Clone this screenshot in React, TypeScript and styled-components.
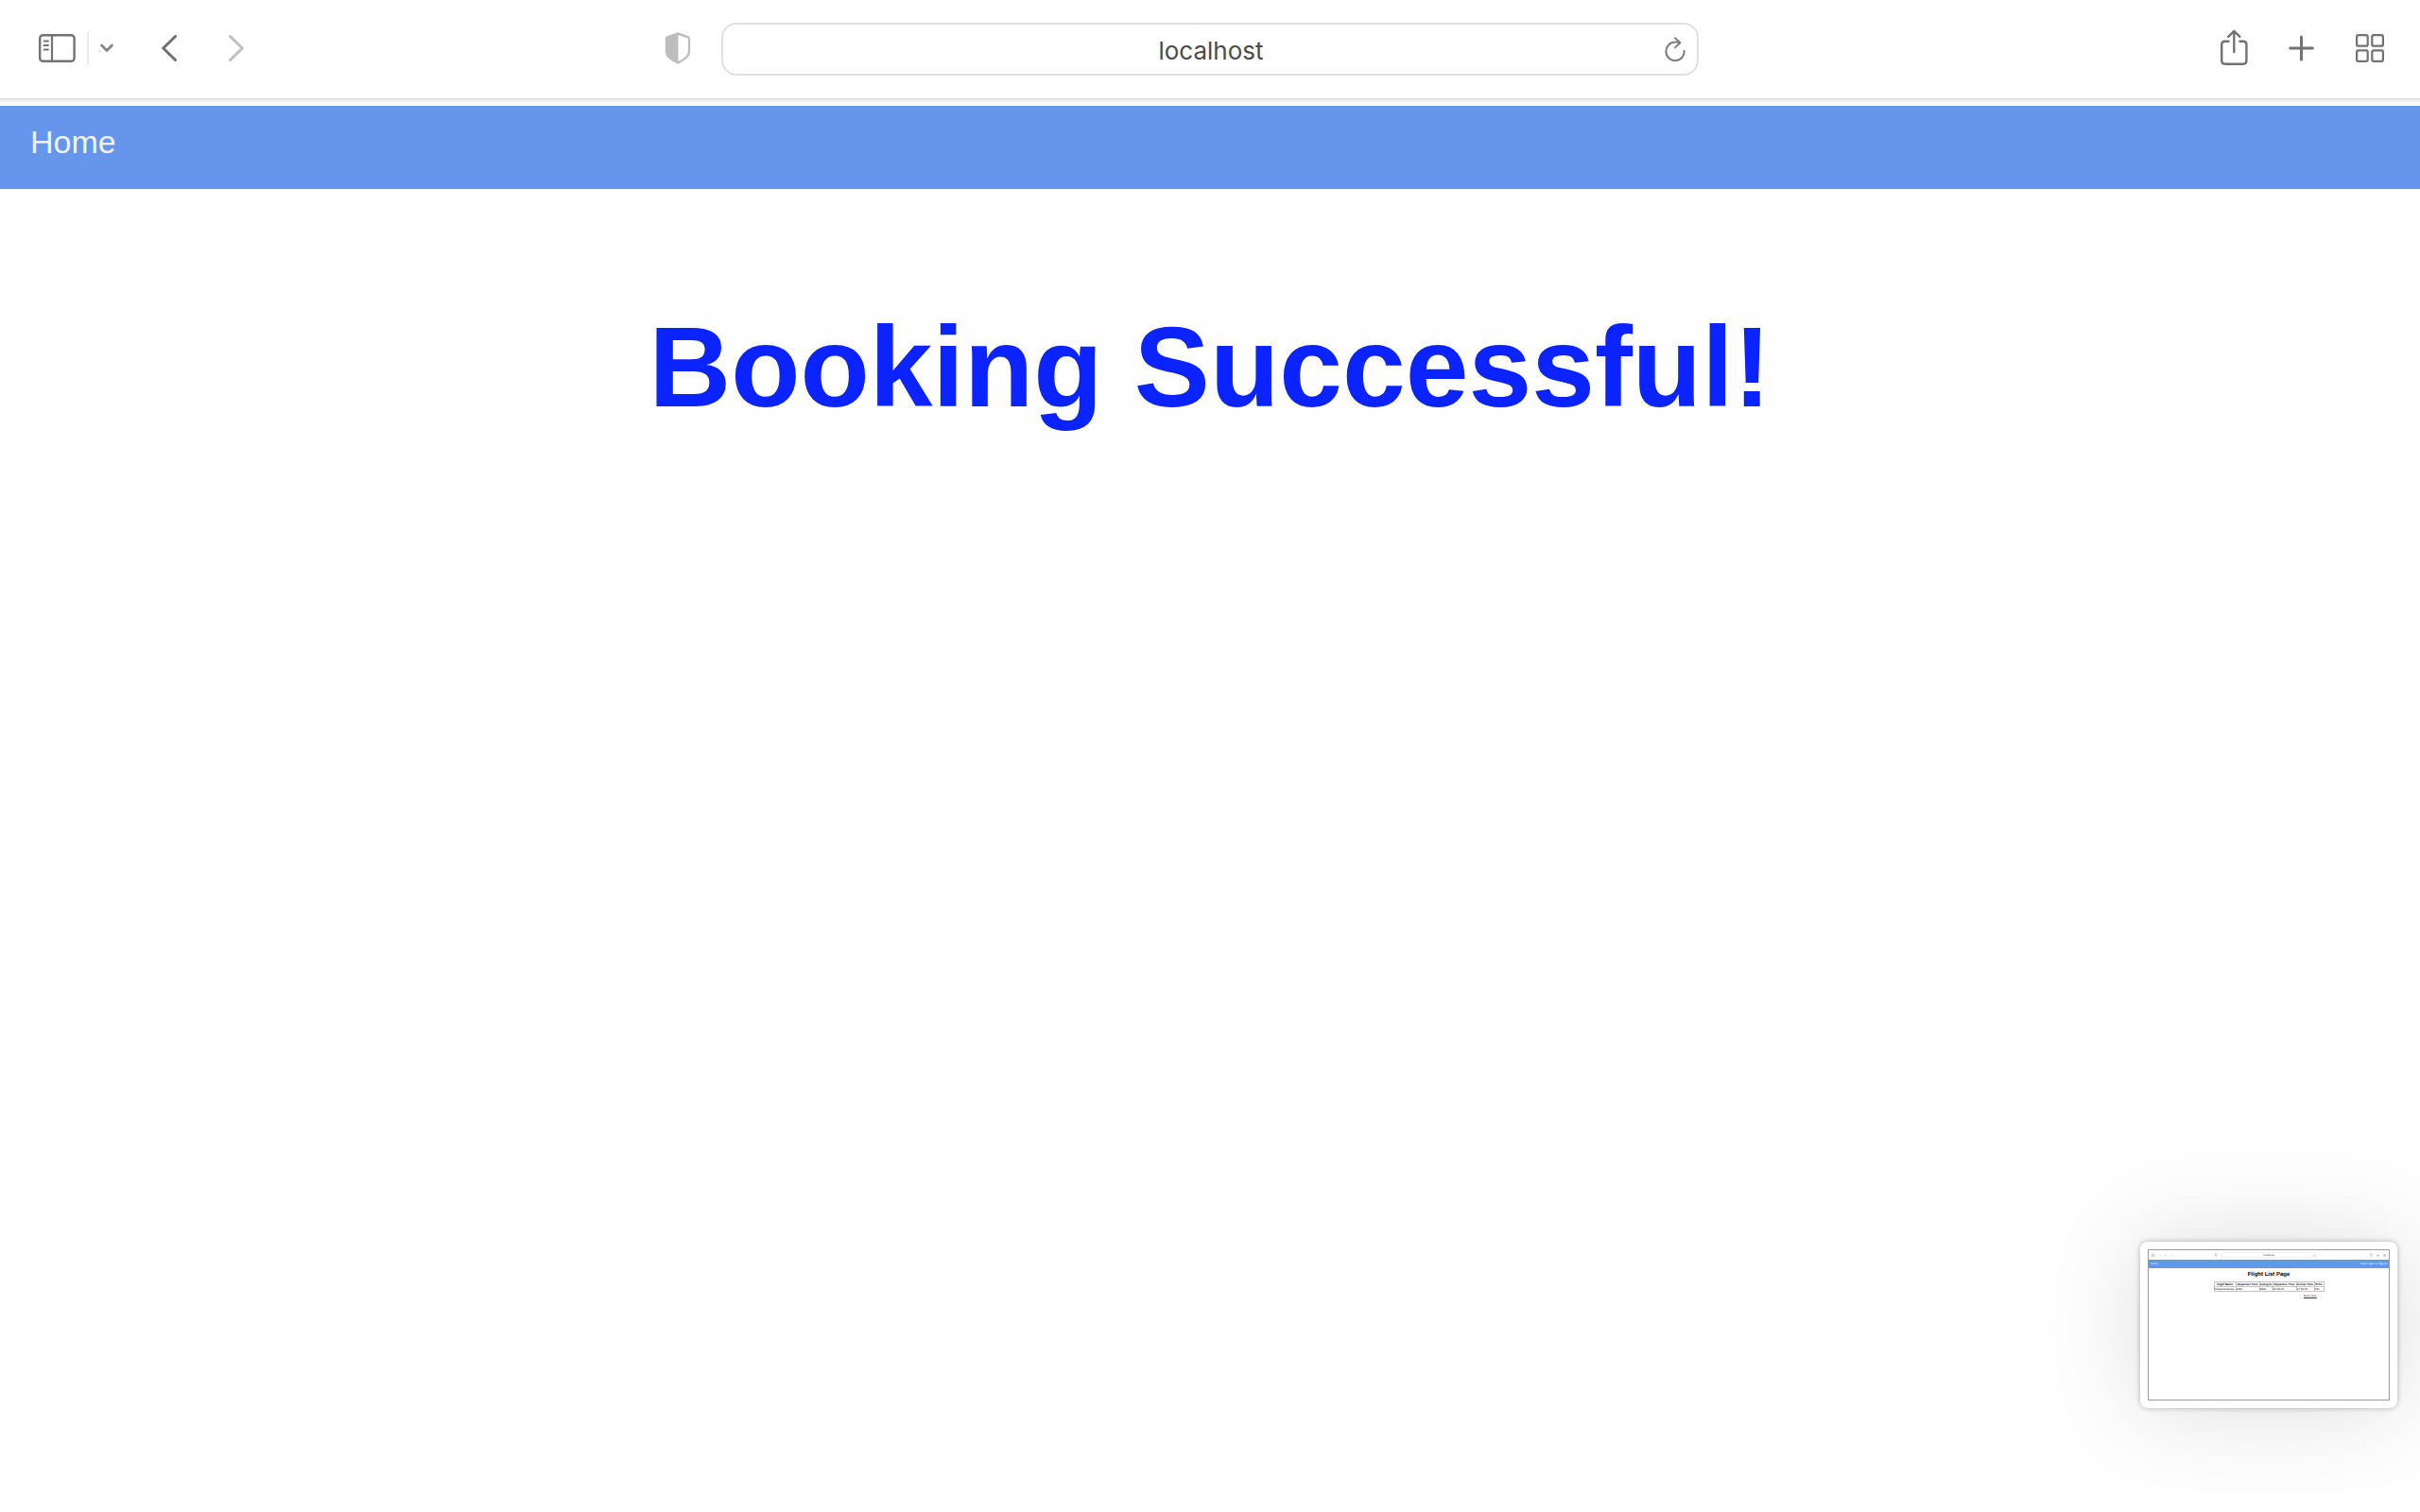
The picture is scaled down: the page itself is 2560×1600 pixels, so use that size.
import React from 'react';
import styled, { createGlobalStyle } from 'styled-components';

const GlobalStyle = createGlobalStyle`
  *, *::before, *::after { box-sizing: border-box; }
  body {
    margin: 0;
    background: #fefefe;
    font-family: "Liberation Sans", Arial, sans-serif;
  }
`;

/* ---------- icons ---------- */

type IconProps = { width?: number; height?: number };

const SidebarIcon = ({ width = 39, height = 30 }: IconProps) => (
  <svg width={width} height={height} viewBox="0 0 39 30" fill="none" stroke="#727272" aria-hidden="true">
    <rect x="1.2" y="1.2" width="36.4" height="27.6" rx="3.4" strokeWidth="2.4" />
    <path d="M14 1v28" strokeWidth="2.2" />
    <path d="M5.6 7.5h4.4M5.6 12h4.4M5.6 16.5h4.4" strokeWidth="1.8" strokeLinecap="round" />
  </svg>
);

const ChevronDownIcon = ({ width = 14, height = 10 }: IconProps) => (
  <svg width={width} height={height} viewBox="0 0 14 10" fill="none" stroke="#868686" strokeWidth="2.8" strokeLinecap="round" strokeLinejoin="round" aria-hidden="true">
    <path d="M1.6 2l5.4 5.4L12.4 2" />
  </svg>
);

const BackIcon = ({ width = 16, height = 28 }: IconProps) => (
  <svg width={width} height={height} viewBox="0 0 16 28" fill="none" stroke="#6f6f6f" strokeWidth="3" strokeLinecap="round" strokeLinejoin="round" aria-hidden="true">
    <path d="M14.5 1.5L1.7 14l12.8 12.5" />
  </svg>
);

const ForwardIcon = ({ width = 16, height = 28 }: IconProps) => (
  <svg width={width} height={height} viewBox="0 0 16 28" fill="none" stroke="#bfbfbf" strokeWidth="3" strokeLinecap="round" strokeLinejoin="round" aria-hidden="true">
    <path d="M1.5 1.5L14.3 14L1.5 26.5" />
  </svg>
);

const ShieldIcon = ({ width = 28, height = 34 }: IconProps) => (
  <svg width={width} height={height} viewBox="0 0 28 34" aria-hidden="true">
    <path
      d="M14 1.5L25 5.4Q26 5.8 26 6.9V20.3Q26 24.8 22 27.6Q18 30.6 14 32.5Q10 30.6 6 27.6Q2 24.8 2 20.3V6.9Q2 5.8 3 5.4Z"
      fill="none"
      stroke="#bdbdbd"
      strokeWidth="2.4"
    />
    <path d="M14.4 1.5L3 5.4Q2 5.8 2 6.9V20.3Q2 24.8 6 27.6Q10 30.6 14.4 32.5Z" fill="#bdbdbd" />
  </svg>
);

const ReloadIcon = ({ width = 22, height = 26 }: IconProps) => (
  <svg width={width} height={height} viewBox="0 0 22 26" fill="none" stroke="#7d7d7d" strokeWidth="2" strokeLinecap="round" strokeLinejoin="round" aria-hidden="true">
    <path d="M20.6 14.8A9.6 9.8 0 1 1 11 5.6Q13.6 5.5 16 6" />
    <path d="M10.9 1.2L16.4 6.2L11 11.4" />
  </svg>
);

const ShareIcon = ({ width = 30, height = 40 }: IconProps) => (
  <svg width={width} height={height} viewBox="0 0 30 40" fill="none" stroke="#727272" strokeWidth="2.4" strokeLinecap="round" aria-hidden="true">
    <path d="M10.4 12.7H5.6Q2.2 12.7 2.2 16.1V33.3Q2.2 36.7 5.6 36.7H25Q28.4 36.7 28.4 33.3V16.1Q28.4 12.7 25 12.7H20.4" strokeLinecap="butt" />
    <path d="M15.3 24V3M9.2 7.8L15.3 1.8L21.4 7.8" strokeWidth="2.4" strokeLinejoin="round" />
  </svg>
);

const PlusIcon = ({ width = 28, height = 28 }: IconProps) => (
  <svg width={width} height={height} viewBox="0 0 28 28" fill="none" stroke="#727272" strokeWidth="3" strokeLinecap="round" aria-hidden="true">
    <path d="M13.5 2v24M1.8 14h23.6" />
  </svg>
);

const GridIcon = ({ width = 30, height = 30 }: IconProps) => (
  <svg width={width} height={height} viewBox="0 0 30 30" fill="none" stroke="#727272" strokeWidth="2.2" aria-hidden="true">
    <rect x="1.1" y="1.1" width="11.6" height="11.6" rx="1.8" />
    <rect x="17.3" y="1.1" width="11.6" height="11.6" rx="1.8" />
    <rect x="1.1" y="17.3" width="11.6" height="11.6" rx="1.8" />
    <rect x="17.3" y="17.3" width="11.6" height="11.6" rx="1.8" />
  </svg>
);

/* ---------- browser toolbar ---------- */

const Toolbar = styled.header`
  display: grid;
  grid-template-columns: 1fr minmax(0, 1034px) 1fr;
  align-items: center;
  height: 105px;
  background: #ffffff;
  border-bottom: 1px solid #d9d9d9;
`;

const ToolGroup = styled.div<{ $end?: boolean }>`
  display: flex;
  align-items: center;
  justify-content: ${(p) => (p.$end ? 'flex-end' : 'flex-start')};
  gap: ${(p) => (p.$end ? '43px' : '12px')};
  padding: ${(p) => (p.$end ? '0 38px 2px 0' : '0 32px 2px 41px')};
`;

const ToolButton = styled.button<{ $before?: number; $push?: boolean }>`
  display: flex;
  padding: 0;
  margin-left: ${(p) => (p.$push ? 'auto' : `${p.$before ?? 0}px`)};
  border: 0;
  background: none;
`;

const Divider = styled.span`
  width: 2px;
  height: 36px;
  background: #ebebeb;
`;

const AddressBox = styled.div`
  display: flex;
  align-items: center;
  height: 56px;
  padding: 0 12px 0 36px;
  border: 2px solid #e0e0e0;
  border-radius: 16px;
  background: #ffffff;
`;

const AddressInput = styled.input`
  flex: 1;
  min-width: 0;
  padding: 4px 0 0;
  border: 0;
  outline: 0;
  background: none;
  color: #4b4b4b;
  font: 400 26px/32px Inter, "Liberation Sans", sans-serif;
  text-align: center;
`;

const ToolbarFade = styled.div`
  height: 7px;
  background: linear-gradient(#e9e9e9, #fefefe 80%);
`;

/* ---------- page ---------- */

const NavBar = styled.nav`
  display: flex;
  align-items: flex-start;
  height: 88px;
  padding: 18px 32px 0;
  background: #6696eb;
`;

const NavLink = styled.a`
  color: #f2f2f2;
  font-size: 34px;
  line-height: 40px;
  text-decoration: none;
`;

const Title = styled.h1`
  margin: 120px 0 0;
  color: #0a23ff;
  font-size: 120px;
  line-height: 136px;
  text-align: center;
`;

/* ---------- floating preview ---------- */

const Preview = styled.aside`
  position: fixed;
  right: 24px;
  bottom: 110px;
  padding: 8px;
  border-radius: 8px;
  background: #ffffff;
  box-shadow: 0 0 6px rgba(0, 0, 0, 0.28), 0 0 100px rgba(0, 0, 0, 0.13);
`;

const PreviewScreen = styled.div`
  width: 256px;
  height: 160px;
  border: 1px solid #9c9c9c;
  background: #ffffff;
  font-size: 3px;
  line-height: 4px;
  text-rendering: geometricPrecision;
`;

const PreviewToolbar = styled.div`
  display: grid;
  grid-template-columns: 1fr 103px 1fr;
  align-items: center;
  height: 10px;
`;

const PreviewTools = styled.div<{ $end?: boolean }>`
  display: flex;
  align-items: center;
  justify-content: ${(p) => (p.$end ? 'flex-end' : 'flex-start')};
  gap: 4px;
  padding: 0 3px;

  svg:last-child { margin-left: ${(p) => (p.$end ? '0' : 'auto')}; }
`;

const PreviewAddress = styled.div`
  display: flex;
  align-items: center;
  justify-content: space-between;
  height: 6px;
  padding: 0 1px;
  border: 1px solid #f1f1f1;
  border-radius: 2px;
  color: #4b4b4b;

  &::before { content: ''; width: 3px; }
`;

const PreviewNav = styled.div`
  display: flex;
  justify-content: space-between;
  height: 9px;
  padding: 2px 2px 0;
  background: #6696eb;
`;

const PreviewLink = styled.a`
  color: #f2f2f2;
  text-decoration: none;
`;

const PreviewTitle = styled.h2`
  margin: 3px 0;
  color: #000000;
  font-size: 6px;
  line-height: 8px;
  text-align: center;
`;

const FlightTable = styled.table`
  width: 116px;
  margin: 0 auto;
  border-collapse: collapse;
  table-layout: fixed;
  color: #000000;
  white-space: nowrap;

  th, td {
    padding: 0;
    border: 1px solid #c4c4c4;
    text-align: left;
  }
  th { text-align: center; }
`;

const BookLink = styled.a`
  display: block;
  width: fit-content;
  margin: 2px 0 0 164px;
  color: #551a8b;
`;

const columns = [
  { name: 'Flight Name', value: 'United Airelines', width: 23 },
  { name: 'Departure from', value: 'USA', width: 25 },
  { name: 'Going to', value: 'ADD', width: 14 },
  { name: 'Departure Time', value: '01:00:00', width: 25 },
  { name: 'Arrival Time', value: '17:00:00', width: 19 },
  { name: 'Price', value: '700', width: 10 },
];

const FlightPreview = () => (
  <Preview aria-label="Preview">
    <PreviewScreen>
      <PreviewToolbar>
        <PreviewTools>
          <SidebarIcon width={4} height={3} />
          <ChevronDownIcon width={2} height={1} />
          <BackIcon width={2} height={3} />
          <ForwardIcon width={2} height={3} />
          <ShieldIcon width={3} height={4} />
        </PreviewTools>
        <PreviewAddress>
          <span>localhost</span>
          <ReloadIcon width={3} height={3} />
        </PreviewAddress>
        <PreviewTools $end>
          <ShareIcon width={3} height={4} />
          <PlusIcon width={3} height={3} />
          <GridIcon width={3} height={3} />
        </PreviewTools>
      </PreviewToolbar>
      <PreviewNav>
        <PreviewLink href="#home">Home</PreviewLink>
        <PreviewLink href="#login">User Login or Signup</PreviewLink>
      </PreviewNav>
      <PreviewTitle>Flight List Page</PreviewTitle>
      <FlightTable>
        <colgroup>
          {columns.map((c) => (
            <col key={c.name} style={{ width: c.width }} />
          ))}
        </colgroup>
        <thead>
          <tr>
            {columns.map((c) => (
              <th key={c.name}>{c.name}</th>
            ))}
          </tr>
        </thead>
        <tbody>
          <tr>
            {columns.map((c) => (
              <td key={c.name}>{c.value}</td>
            ))}
          </tr>
        </tbody>
      </FlightTable>
      <BookLink href="#book">Book Now</BookLink>
    </PreviewScreen>
  </Preview>
);

export default function App() {
  return (
    <>
      <GlobalStyle />
      <Toolbar>
        <ToolGroup>
          <ToolButton aria-label="Show sidebar"><SidebarIcon /></ToolButton>
          <Divider />
          <ToolButton aria-label="Tab groups"><ChevronDownIcon /></ToolButton>
          <ToolButton aria-label="Back" $before={39}><BackIcon /></ToolButton>
          <ToolButton aria-label="Forward" $before={43}><ForwardIcon /></ToolButton>
          <ToolButton aria-label="Privacy report" $push><ShieldIcon /></ToolButton>
        </ToolGroup>
        <AddressBox>
          <AddressInput aria-label="Address" defaultValue="localhost" />
          <ToolButton aria-label="Reload"><ReloadIcon /></ToolButton>
        </AddressBox>
        <ToolGroup $end>
          <ToolButton aria-label="Share"><ShareIcon /></ToolButton>
          <ToolButton aria-label="New tab"><PlusIcon /></ToolButton>
          <ToolButton aria-label="Tab overview"><GridIcon /></ToolButton>
        </ToolGroup>
      </Toolbar>
      <ToolbarFade />
      <NavBar>
        <NavLink href="#home">Home</NavLink>
      </NavBar>
      <main>
        <Title>Booking Successful!</Title>
      </main>
      <FlightPreview />
    </>
  );
}
